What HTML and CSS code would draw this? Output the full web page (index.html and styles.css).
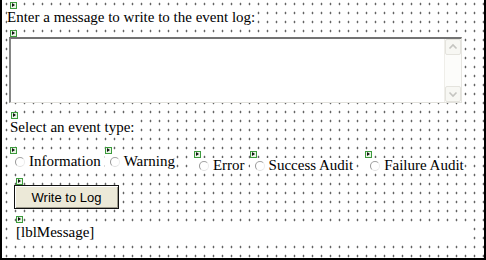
FILE: index.html
```html
<!DOCTYPE html>
<html lang="en">
<head>
  <meta charset="UTF-8">
  <title>Event Log</title>
  <link rel="stylesheet" href="styles.css">
</head>
<body>
  <!-- Designer surface -->
  <div class="designer">
    <span class="glyph g-first"></span>
    <div><span class="label l-first">Enter a message to write to the event log:</span></div>

    <span class="glyph g-box"></span>
    <div class="textbox">
      <div class="text-area"></div>
      <div class="scrollbar">
        <span class="sb-btn">
          <svg width="14" height="14" viewBox="0 0 14 14"><polyline points="3.5,8.5 7,5 10.5,8.5" fill="none" stroke="#c4c4c0" stroke-width="1.6"/></svg>
        </span>
        <span class="sb-track"></span>
        <span class="sb-btn">
          <svg width="14" height="14" viewBox="0 0 14 14"><polyline points="3.5,5.5 7,9 10.5,5.5" fill="none" stroke="#c4c4c0" stroke-width="1.6"/></svg>
        </span>
      </div>
    </div>

    <span class="glyph g-select"></span>
    <div><span class="label l-select">Select an event type:</span></div>

    <!-- Event type radios -->
    <div class="options">
      <div class="opt-item i-info">
        <span class="glyph"></span>
        <span class="opt"><span class="radio"></span>Information</span>
      </div>
      <div class="opt-item i-warn">
        <span class="glyph"></span>
        <span class="opt"><span class="radio"></span>Warning</span>
      </div>
      <div class="opt-item low i-error">
        <span class="glyph"></span>
        <span class="opt"><span class="radio"></span>Error</span>
      </div>
      <div class="opt-item low i-success">
        <span class="glyph"></span>
        <span class="opt"><span class="radio"></span>Success Audit</span>
      </div>
      <div class="opt-item low i-failure">
        <span class="glyph"></span>
        <span class="opt"><span class="radio"></span>Failure Audit</span>
      </div>
    </div>

    <span class="glyph g-btn"></span>
    <button class="write-btn">Write to Log</button>

    <span class="glyph g-msg"></span>
    <div class="message">[lblMessage]</div>
  </div>
</body>
</html>
```

FILE: styles.css
```css
/* General Styles */
body {
  margin: 0;
  padding: 0;
  background: #fff;
}

.designer {
  box-sizing: border-box;
  width: 486px;
  height: 260px;
  padding-top: 2px;
  border-left: 2px solid #000;
  border-right: 2px solid #000;
  border-bottom: 2px solid #000;
  background-color: #fff;
  background-image: radial-gradient(circle, #111 0.65px, transparent 1.15px);
  background-size: 9px 9px;
  background-position: 0 -0.5px;
  font-family: 'Liberation Serif', 'Times New Roman', serif;
  font-size: 15px;
  color: #000;
  overflow: hidden;
}

/* Control glyphs */
.glyph {
  display: block;
  box-sizing: border-box;
  width: 7px;
  height: 7px;
  border: 1px solid #3d9a3d;
  background: #e9f7e6;
  position: relative;
}

.glyph::after {
  content: '';
  position: absolute;
  left: 1px;
  top: 0;
  border-left: 3px solid #111;
  border-top: 2.5px solid transparent;
  border-bottom: 2.5px solid transparent;
}

.g-first { margin-left: 8px; }
.g-box { margin: 4px 0 0 8px; }
.g-select { margin: 9px 0 0 9px; }
.g-btn { margin: 5px 0 0 14px; }
.g-msg { margin: 7px 0 0 14px; }

/* Labels */
.label {
  display: inline-block;
  line-height: 17px;
  background: #fff;
}

.l-first { margin-left: 5px; }
.l-select { margin-left: 8px; }

/* Multiline text box */
.textbox {
  box-sizing: border-box;
  display: flex;
  width: 453px;
  height: 66px;
  margin-left: 7px;
  border-top: 2px solid #737373;
  border-left: 2px solid #858585;
  border-right: 1px solid #e6e5e0;
  border-bottom: 1px solid #e2e1dc;
  background: #fff;
}

.text-area {
  flex: 1;
}

.scrollbar {
  width: 16px;
  display: flex;
  flex-direction: column;
  background: #fcfcfa;
  border-left: 1px solid #efeee9;
}

.sb-btn {
  box-sizing: border-box;
  height: 16px;
  display: flex;
  align-items: center;
  justify-content: center;
  border: 1px solid #e4e3dd;
  border-radius: 2px;
  background: #f7f7f3;
}

.sb-track {
  flex: 1;
}

/* Radio options */
.options {
  display: flex;
  align-items: flex-start;
  margin-top: 11px;
}

.opt-item.low {
  margin-top: 4px;
}

.i-info { margin-left: 8px; }
.i-warn { margin-left: 4px; }
.i-error { margin-left: 19px; }
.i-success { margin-left: 5px; }
.i-failure { margin-left: 12px; }

.opt {
  display: flex;
  align-items: flex-start;
  line-height: 15px;
  background: #fff;
  white-space: nowrap;
}

.radio {
  box-sizing: border-box;
  width: 10px;
  height: 10px;
  margin: 3px 4px 0 5px;
  border: 1px solid;
  border-color: #a4a4a4 #ececec #e0e0e0 #969696;
  border-radius: 50%;
  background: #fff;
}

/* Button */
.write-btn {
  display: block;
  box-sizing: border-box;
  width: 105px;
  height: 24px;
  margin-left: 12px;
  padding: 0;
  border: 1px solid #111;
  box-shadow: inset 1px 1px #fff, inset -1px -1px #9d9a8c;
  background: #ece9d8;
  font-family: 'Liberation Sans', Arial, sans-serif;
  font-size: 13px;
  color: #000;
}

/* Message label */
.message {
  box-sizing: border-box;
  width: 456px;
  margin-left: 12px;
  padding: 1px 0 2px 2px;
  line-height: 17px;
  background: #fff;
}
```
